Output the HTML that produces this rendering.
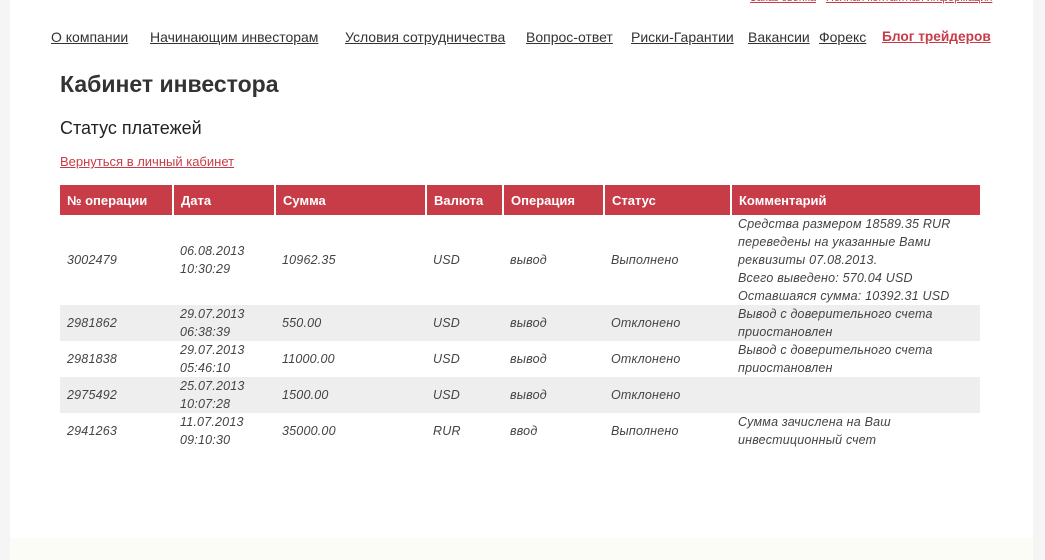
<!DOCTYPE html>
<html><head><meta charset="utf-8"><style>
body{margin:0;background:#f5f5f5;font-family:"Liberation Sans",sans-serif;width:1045px;height:560px;overflow:hidden;position:relative}
.page{position:absolute;left:10px;top:0;width:1023px;height:560px;background:#fff}
.foot{position:absolute;left:10px;top:538px;width:1023px;height:22px;background:#fcfcf7}
a{color:#333;text-decoration:underline}
.nav a{position:absolute;top:29px;font-size:14px;color:#333}
.top a{position:absolute;top:-8px;font-size:11px;color:#c83c48}
h1{position:absolute;left:60px;top:71px;margin:0;font-size:23px;font-weight:bold;color:#333}
h2{position:absolute;left:60px;top:118px;margin:0;font-size:18px;font-weight:normal;color:#222}
.back{position:absolute;left:60px;top:154px;font-size:13px;color:#c83c48}
table{position:absolute;left:60px;top:185px;border-collapse:collapse;width:920px;table-layout:fixed}
th{background:#c83c48;color:#fff;font-size:13px;text-align:left;height:30px;padding:0 0 0 7px;border-right:2px solid #fff;font-weight:bold}
td{font-size:12.5px;font-style:italic;color:#444;padding:0 0 0 7px;line-height:18px;letter-spacing:0.2px;vertical-align:middle;white-space:nowrap}
tr.g td{background:#eee}
</style></head><body>
<div class="page"></div><div class="foot"></div>
<div class="top"><a style="left:750px">Заказ звонка</a><a style="left:826px">Полная контактная информация</a></div>
<div class="nav">
<a style="left:51px">О компании</a>
<a style="left:150px">Начинающим инвесторам</a>
<a style="left:345px">Условия сотрудничества</a>
<a style="left:526px">Вопрос-ответ</a>
<a style="left:631px">Риски-Гарантии</a>
<a style="left:748px">Вакансии</a>
<a style="left:819px">Форекс</a>
<a style="left:882px;color:#c83c48;font-weight:bold;font-size:13.7px">Блог трейдеров</a>
</div>
<h1>Кабинет инвестора</h1>
<h2>Статус платежей</h2>
<a class="back">Вернуться в личный кабинет</a>
<table>
<colgroup><col style="width:113px"><col style="width:102px"><col style="width:151px"><col style="width:77px"><col style="width:101px"><col style="width:127px"><col style="width:249px"></colgroup>
<tr><th>№ операции</th><th>Дата</th><th>Сумма</th><th>Валюта</th><th>Операция</th><th>Статус</th><th style="border:0">Комментарий</th></tr>
<tr style="height:90px"><td>3002479</td><td>06.08.2013<br>10:30:29</td><td>10962.35</td><td>USD</td><td>вывод</td><td>Выполнено</td><td>Средства размером 18589.35 RUR<br>переведены на указанные Вами<br>реквизиты 07.08.2013.<br>Всего выведено: 570.04 USD<br>Оставшаяся сумма: 10392.31 USD</td></tr>
<tr class="g" style="height:36px"><td>2981862</td><td>29.07.2013<br>06:38:39</td><td>550.00</td><td>USD</td><td>вывод</td><td>Отклонено</td><td>Вывод с доверительного счета<br>приостановлен</td></tr>
<tr style="height:36px"><td>2981838</td><td>29.07.2013<br>05:46:10</td><td>11000.00</td><td>USD</td><td>вывод</td><td>Отклонено</td><td>Вывод с доверительного счета<br>приостановлен</td></tr>
<tr class="g" style="height:36px"><td>2975492</td><td>25.07.2013<br>10:07:28</td><td>1500.00</td><td>USD</td><td>вывод</td><td>Отклонено</td><td></td></tr>
<tr style="height:36px"><td>2941263</td><td>11.07.2013<br>09:10:30</td><td>35000.00</td><td>RUR</td><td>ввод</td><td>Выполнено</td><td>Сумма зачислена на Ваш<br>инвестиционный счет</td></tr>
</table>
</body></html>
